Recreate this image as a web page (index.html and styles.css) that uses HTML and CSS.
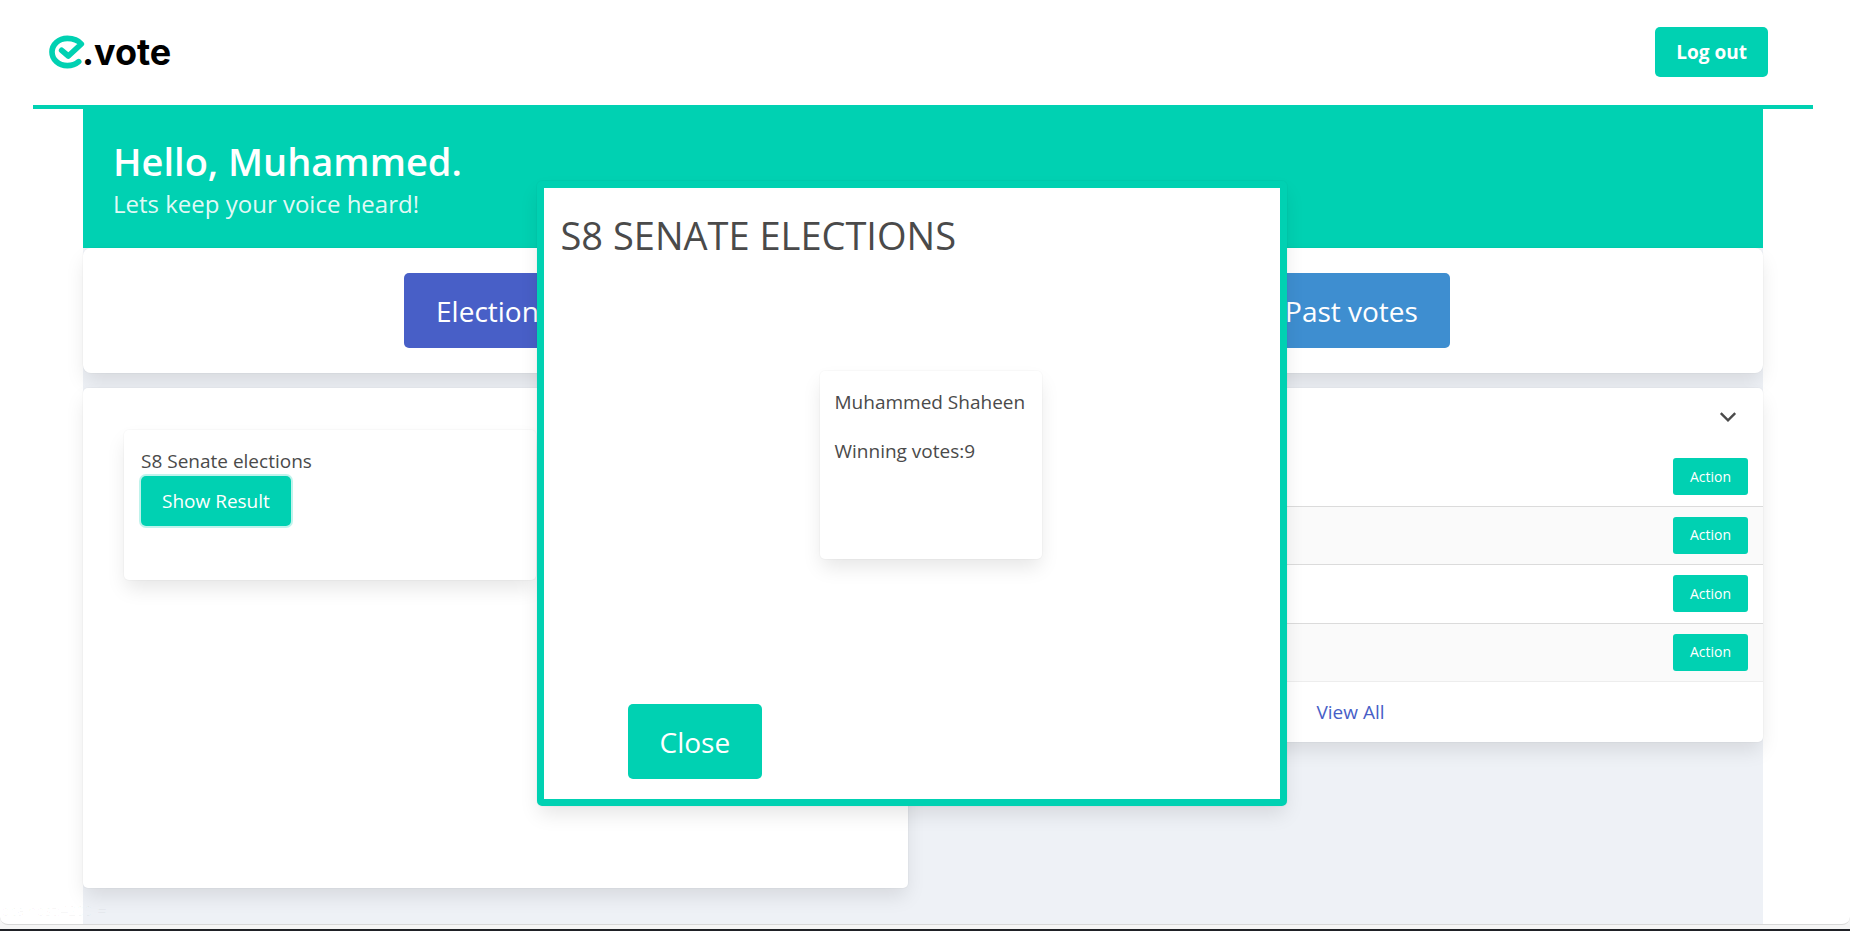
FILE: index.html
```html
<!DOCTYPE html>
<html lang="en">
<head>
  <meta charset="utf-8">
  <meta name="viewport" content="width=device-width, initial-scale=1">
  <title>e.vote</title>
  <link rel="stylesheet" href="styles.css">
</head>
<body>
  <div class="page">
    <header class="navbar">
      <a class="brand" href="#" aria-label="e.vote">
        <svg class="brand-mark" viewBox="87 76 108 102" aria-hidden="true">
          <path d="M125 122 L145 139 L184 103 C174 91 160 86 142 86 C116 86 96 104 96 127 C96 150 116 168 142 168 C156 168 168 163 176 156"/>
        </svg>
        <span class="brand-name">.vote</span>
      </a>
      <button class="button is-strong" type="button">Log out</button>
    </header>

    <main class="container">
      <section class="hero">
        <h1 class="hero-title">Hello, Muhammed.</h1>
        <p class="hero-subtitle">Lets keep your voice heard!</p>
      </section>

      <nav class="card tabs">
        <button class="button is-large is-link" type="button">Elections</button>
        <button class="button is-large is-info" type="button">Past votes</button>
      </nav>

      <div class="columns">
        <section class="card elections">
          <article class="card election">
            <p>S8 Senate elections</p>
            <button class="button is-focused" type="button">Show Result</button>
          </article>
        </section>

        <section class="card events">
          <header class="events-header">
            <button class="toggle" type="button" aria-label="Toggle list">
              <svg viewBox="0 0 16 10" aria-hidden="true"><path d="M2 1l6 6 6-6"/></svg>
            </button>
          </header>
          <table class="table">
            <tbody>
              <tr><td><button class="button is-small" type="button">Action</button></td></tr>
              <tr><td><button class="button is-small" type="button">Action</button></td></tr>
              <tr><td><button class="button is-small" type="button">Action</button></td></tr>
              <tr><td><button class="button is-small" type="button">Action</button></td></tr>
            </tbody>
          </table>
          <footer class="events-footer"><a href="#">View All</a></footer>
        </section>
      </div>
    </main>
  </div>

  <div class="modal" role="dialog" aria-labelledby="result-title">
    <h2 class="modal-title" id="result-title">S8 SENATE ELECTIONS</h2>
    <article class="card winner">
      <p>Muhammed Shaheen</p>
      <p>Winning votes:9</p>
    </article>
    <button class="button is-large modal-close" type="button">Close</button>
  </div>

  <div class="link-status">localhost:4200/#</div>
  <div class="window-edge"></div>
</body>
</html>
```

FILE: styles.css
```css
:root {
  --primary: #00d1b2;
  --text: #4a4a4a;
  --shadow: 0 10px 20px -2px rgba(10, 10, 10, 0.1), 0 0 0 1px rgba(10, 10, 10, 0.02);
}

* {
  box-sizing: border-box;
}

body {
  display: flex;
  flex-direction: column;
  height: 100vh;
  margin: 0;
  overflow: hidden;
  background: #f5f5f5;
  color: var(--text);
  font: 19px/30px "Segoe UI", "Open Sans", "Noto Sans", sans-serif;
}

h1, h2, p {
  margin: 0;
}

.page {
  display: flex;
  flex: 1;
  flex-direction: column;
  min-height: 0;
  padding: 0 37px 0 33px;
  overflow: hidden;
  background: #fff;
  border-bottom: 1px solid #d8d8d8;
  border-radius: 0 0 8px 8px;
}

.navbar {
  display: flex;
  flex: none;
  align-items: center;
  justify-content: space-between;
  height: 109px;
  padding: 0 45px 2px 16px;
  border-bottom: 4px solid var(--primary);
}

.brand {
  display: flex;
  align-items: center;
  color: #000;
  text-decoration: none;
}

.brand-mark {
  width: 36px;
  height: 34px;
  fill: none;
  stroke: var(--primary);
  stroke-width: 17;
  stroke-linecap: round;
  stroke-linejoin: round;
}

.brand-name {
  margin-left: -3px;
  font: 700 36px/40px Inter, sans-serif;
}

.button {
  height: 50px;
  padding: 0 21px;
  border: 0;
  border-radius: 5px;
  background: var(--primary);
  color: #fff;
  font: inherit;
}

.is-strong {
  font-weight: 700;
}

.is-large {
  height: 75px;
  padding: 0 32px;
  font-size: 28px;
}

.is-small {
  height: 37px;
  padding: 0 17px;
  border-radius: 3px;
  font-size: 14px;
}

.is-link {
  background: #485fc7;
}

.is-info {
  background: #3e8ed0;
}

.is-focused {
  box-shadow: 0 0 0 2px rgba(0, 209, 178, 0.25);
}

.container {
  flex: 1;
  width: 100%;
  max-width: 1680px;
  margin: 0 auto;
  background: #eef1f6;
}

.hero {
  padding: 27px 30px;
  background: var(--primary);
  color: #fff;
}

.hero-title {
  font-size: 38px;
  font-weight: 600;
  line-height: 50px;
}

.hero-subtitle {
  color: rgba(255, 255, 255, 0.9);
  font-size: 24px;
  line-height: 35px;
}

.card {
  border-radius: 5px;
  background: #fff;
  box-shadow: var(--shadow);
}

.tabs {
  display: flex;
  justify-content: center;
  gap: 40%;
  padding: 25px 0 25px 8px;
  border-radius: 8px;
}

.columns {
  display: grid;
  grid-template-columns: 1fr 1fr;
  align-items: start;
  gap: 30px;
  margin-top: 15px;
}

.elections {
  min-height: 500px;
  padding: 42px 41px;
}

.election {
  width: 412px;
  height: 150px;
  padding: 17px;
}

.election p {
  line-height: 29px;
}

.events-header {
  display: flex;
  align-items: center;
  justify-content: flex-end;
  height: 60px;
  padding: 0 25px;
}

.toggle {
  display: flex;
  padding: 0;
  border: 0;
  background: none;
}

.toggle svg {
  width: 20px;
  height: 12px;
  fill: none;
  stroke: var(--text);
  stroke-width: 2;
}

.table {
  width: 100%;
  height: 234px;
  border-collapse: separate;
  border-spacing: 0;
}

.table td {
  padding: 0 15px;
  border-bottom: 1px solid #dbdbdb;
  line-height: 0;
  text-align: right;
  vertical-align: middle;
}

.table tr:nth-child(even) td {
  background: #fafafa;
}

.table tr:last-child td {
  border-bottom-color: #ededed;
}

.events-footer {
  padding: 15px;
  text-align: center;
}

.events-footer a {
  color: #485fc7;
  text-decoration: none;
}

.modal {
  position: absolute;
  top: 181px;
  left: 29%;
  display: flex;
  flex-direction: column;
  width: 750px;
  height: 625px;
  padding: 17px 17px 20px;
  border: 7px solid var(--primary);
  border-radius: 5px;
  background: #fff;
  box-shadow: var(--shadow);
}

.modal-title {
  font-size: 38px;
  font-weight: 400;
  line-height: 60px;
}

.winner {
  display: grid;
  gap: 19px;
  align-content: start;
  width: 222px;
  height: 188px;
  margin: 106px 0 0 259px;
  padding: 16px 15px;
  white-space: nowrap;
}

.modal-close {
  align-self: flex-start;
  margin: auto 0 0 67px;
}

.link-status {
  position: absolute;
  bottom: 8px;
  left: -2px;
  color: rgba(0, 0, 0, 0.03);
  font-size: 14px;
  line-height: 24px;
}

.window-edge {
  flex: none;
  height: 6px;
  border-bottom: 2px solid #1f2126;
}
```
